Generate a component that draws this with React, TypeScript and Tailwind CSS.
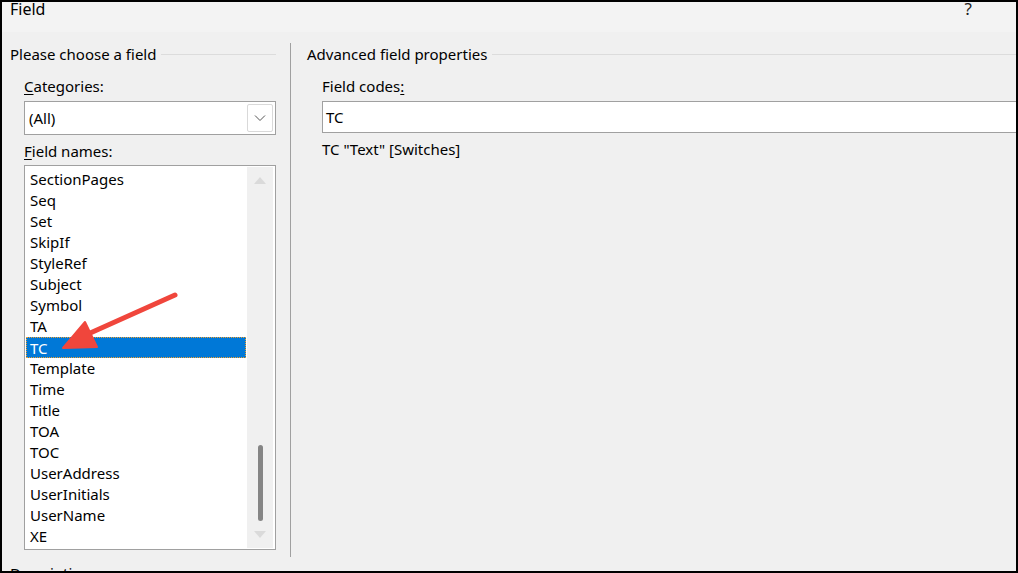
import React from 'react';

const fieldNames = [
  'SectionPages',
  'Seq',
  'Set',
  'SkipIf',
  'StyleRef',
  'Subject',
  'Symbol',
  'TA',
  'TC',
  'Template',
  'Time',
  'Title',
  'TOA',
  'TOC',
  'UserAddress',
  'UserInitials',
  'UserName',
  'XE',
];

const font = { fontFamily: '"Noto Sans", "Segoe UI", sans-serif' };

const App: React.FC = () => {
  return (
    <div className="relative w-[1018px] h-[573px] overflow-hidden bg-black text-[15px] text-[#000]" style={font}>
      <div className="absolute left-[2px] top-[2px] right-[2px] bottom-[2px] flex flex-col bg-[#f0f0f0]">
        {/* title bar */}
        <div className="h-[30px] shrink-0 flex items-start justify-between bg-[#f3f3f3] pl-[8px] pr-[44px]">
          <span className="text-[16px] leading-[18px] -mt-[2px]">Field</span>
          <span className="text-[17px] leading-[18px] -mt-[2px] text-[#222]">?</span>
        </div>

        <div className="flex flex-1 min-h-0">
          {/* left column */}
          <div className="w-[288px] shrink-0 flex flex-col pl-[8px] pt-[12px]">
            <div className="flex items-center h-[20px] pr-[14px]">
              <span className="whitespace-nowrap leading-[20px]">Please choose a field</span>
              <div className="flex-1 h-px bg-[#dcdcdc] ml-[5px]" />
            </div>

            <div className="pl-[14px] pr-[14px] mt-[12px]">
              <div className="leading-[20px] h-[20px]">
                <span className="underline underline-offset-2">C</span>ategories:
              </div>
              <div className="mt-[5px] h-[34px] border border-[#a0a0a0] bg-white flex items-center">
                <span className="flex-1 pl-[4px] leading-[20px]">(All)</span>
                <div className="w-[26px] h-[28px] mr-[2px] border border-[#d9d9d9] rounded-[2px] bg-white flex items-center justify-center">
                  <svg width="12" height="8" viewBox="0 0 12 8">
                    <path d="M1 1.5 L6 6.5 L11 1.5" fill="none" stroke="#555" strokeWidth="1" />
                  </svg>
                </div>
              </div>

              <div className="leading-[20px] h-[20px] mt-[6px]">
                <span className="underline underline-offset-2">F</span>ield names:
              </div>
              <div className="mt-[4px] h-[385px] border border-[#a0a0a0] bg-white flex">
                <div className="flex-1 pt-[3px] pl-[1px] pr-[1px]">
                  {fieldNames.map((name) =>
                    name === 'TC' ? (
                      <div
                        key={name}
                        className="h-[21px] leading-[20px] pl-[3px] bg-[#0078d7] text-white border border-dotted border-[#f0a030]"
                      >
                        {name}
                      </div>
                    ) : (
                      <div key={name} className="h-[21px] leading-[21px] pl-[4px]">
                        {name}
                      </div>
                    )
                  )}
                </div>
                <div className="w-[26px] my-[1px] mr-[2px] bg-[#f0f0f0] flex flex-col items-center justify-between py-[10px]">
                  <svg width="12" height="7" viewBox="0 0 12 7">
                    <path d="M0 7 L6 0 L12 7 Z" fill="#dadada" />
                  </svg>
                  <div className="flex-1 w-full flex flex-col items-center justify-end pb-[10px]">
                    <div className="w-[5px] h-[76px] rounded-full bg-[#858585]" />
                  </div>
                  <svg width="12" height="7" viewBox="0 0 12 7">
                    <path d="M0 0 L6 7 L12 0 Z" fill="#dadada" />
                  </svg>
                </div>
              </div>
            </div>

            <div className="mt-[13px] leading-[20px]">Description:</div>
          </div>

          {/* divider */}
          <div className="w-px bg-[#a0a0a0] mt-[11px] mb-[14px] shrink-0" />

          {/* right column */}
          <div className="flex-1 flex flex-col pl-[16px] pt-[12px]">
            <div className="flex items-center h-[20px]">
              <span className="whitespace-nowrap leading-[20px]">Advanced field properties</span>
              <div className="flex-1 h-px bg-[#dcdcdc] ml-[5px]" />
            </div>
            <div className="pl-[15px] mt-[12px]">
              <div className="leading-[20px] h-[20px]">
                Field codes<span className="underline underline-offset-2">:</span>
              </div>
              <div className="mt-[5px] h-[32px] border border-[#a0a0a0] border-r-0 bg-white flex items-center pl-[3px] leading-[20px]">
                TC
              </div>
              <div className="mt-[6px] leading-[20px]">TC "Text" [Switches]</div>
            </div>
          </div>
        </div>
      </div>

      {/* annotation arrow */}
      <svg className="absolute left-0 top-0 pointer-events-none" width="1018" height="573">
        <line x1="175" y1="295" x2="88" y2="334" stroke="#f0463c" strokeWidth="5" strokeLinecap="round" />
        <path d="M63 348 L85 322 L97 347 Z" fill="#f0463c" stroke="#f0463c" strokeWidth="2" strokeLinejoin="round" />
      </svg>
    </div>
  );
};

export default App;
